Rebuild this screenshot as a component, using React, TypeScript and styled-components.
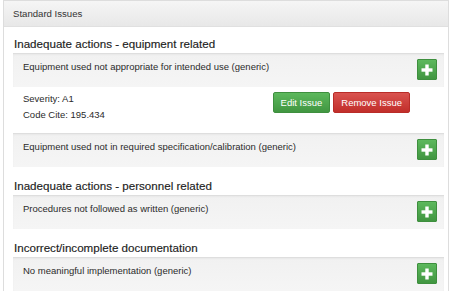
import React from 'react';
import styled, { createGlobalStyle } from 'styled-components';

const GlobalStyle = createGlobalStyle`
  html, body {
    margin: 0;
    padding: 0;
    background: #fff;
  }
  body {
    font-family: "Liberation Sans", Arial, sans-serif;
    color: #333;
  }
`;

const Page = styled.div`
  padding: 0 5px 0 3px;
`;

const Panel = styled.div`
  border: 1px solid #dddddd;
  border-bottom: none;
  background: #fff;
`;

const PanelHeading = styled.div`
  height: 25px;
  padding: 0 9px;
  display: flex;
  align-items: center;
  font-size: 9.6px;
  color: #333;
  background: linear-gradient(to bottom, #f5f5f5 0%, #e8e8e8 100%);
  border-bottom: 1px solid #e0e0e0;
`;

const PanelBody = styled.div`
  padding: 10px 4px 0 9px;
`;

const Category = styled.div`
  & + & {
    margin-top: 12px;
  }
`;

const CategoryTitle = styled.h4`
  margin: 0 0 2px 1px;
  font-size: 11.6px;
  line-height: 14px;
  font-weight: 500;
  color: #222;
  -webkit-text-stroke: 0.15px #222;
`;

const IssueRow = styled.div`
  display: flex;
  align-items: flex-start;
  justify-content: space-between;
  padding: 5px 7px 7px 10px;
  background: linear-gradient(to bottom, #f1f1f1 0%, #f5f5f5 100%);
  border-top: 1px solid #dedede;
  box-shadow: inset 0 1px 2px rgba(0, 0, 0, 0.04);
`;

const IssueText = styled.span`
  font-size: 9.5px;
  line-height: 15px;
  color: #2b2b2b;
`;

const AddButton = styled.button`
  width: 20px;
  height: 21px;
  padding: 0;
  border: 1px solid #3e8f3e;
  border-radius: 1px;
  background: linear-gradient(to bottom, #5cb85c 0%, #419641 100%);
  display: flex;
  align-items: center;
  justify-content: center;
  cursor: pointer;
`;

const Details = styled.div`
  display: flex;
  justify-content: space-between;
  align-items: flex-start;
  padding: 4px 34px 10px 10px;
`;

const DetailLines = styled.div`
  font-size: 9.5px;
  line-height: 16px;
  color: #2b2b2b;
`;

const ButtonGroup = styled.div`
  display: flex;
  gap: 3px;
  margin-top: 1px;
`;

const ActionButton = styled.button<{ $variant: 'success' | 'danger' }>`
  height: 21px;
  padding: 0 7px;
  font-family: "Liberation Sans", Arial, sans-serif;
  font-size: 9.5px;
  color: #fff;
  border-radius: 2px;
  cursor: pointer;
  border: 1px solid ${p => (p.$variant === 'success' ? '#3e8f3e' : '#b92c28')};
  background: ${p =>
    p.$variant === 'success'
      ? 'linear-gradient(to bottom, #5cb85c 0%, #419641 100%)'
      : 'linear-gradient(to bottom, #d9534f 0%, #c12e2a 100%)'};
`;

const PlusIcon = () => (
  <svg width="12" height="12" viewBox="0 0 12 12">
    <rect x="4.3" y="0.5" width="3.4" height="11" fill="#fff" />
    <rect x="0.5" y="4.3" width="11" height="3.4" fill="#fff" />
  </svg>
);

interface Issue {
  text: string;
  severity?: string;
  codeCite?: string;
}

interface IssueCategory {
  title: string;
  issues: Issue[];
}

const categories: IssueCategory[] = [
  {
    title: 'Inadequate actions - equipment related',
    issues: [
      { text: 'Equipment used not appropriate for intended use (generic)', severity: 'A1', codeCite: '195.434' },
      { text: 'Equipment used not in required specification/calibration (generic)' }
    ]
  },
  {
    title: 'Inadequate actions - personnel related',
    issues: [{ text: 'Procedures not followed as written (generic)' }]
  },
  {
    title: 'Incorrect/incomplete documentation',
    issues: [{ text: 'No meaningful implementation (generic)' }]
  }
];

const App: React.FC = () => {
  return (
    <>
      <GlobalStyle />
      <Page>
        <Panel>
          <PanelHeading>Standard Issues</PanelHeading>
          <PanelBody>
            {categories.map((cat, i) => (
              <Category key={i}>
                <CategoryTitle>{cat.title}</CategoryTitle>
                {cat.issues.map((issue, j) => (
                  <React.Fragment key={j}>
                    <IssueRow>
                      <IssueText>{issue.text}</IssueText>
                      <AddButton aria-label="Add issue">
                        <PlusIcon />
                      </AddButton>
                    </IssueRow>
                    {issue.severity && (
                      <Details>
                        <DetailLines>
                          <div>Severity: {issue.severity}</div>
                          <div>Code Cite: {issue.codeCite}</div>
                        </DetailLines>
                        <ButtonGroup>
                          <ActionButton $variant="success">Edit Issue</ActionButton>
                          <ActionButton $variant="danger">Remove Issue</ActionButton>
                        </ButtonGroup>
                      </Details>
                    )}
                  </React.Fragment>
                ))}
              </Category>
            ))}
          </PanelBody>
        </Panel>
      </Page>
    </>
  );
};

export default App;
